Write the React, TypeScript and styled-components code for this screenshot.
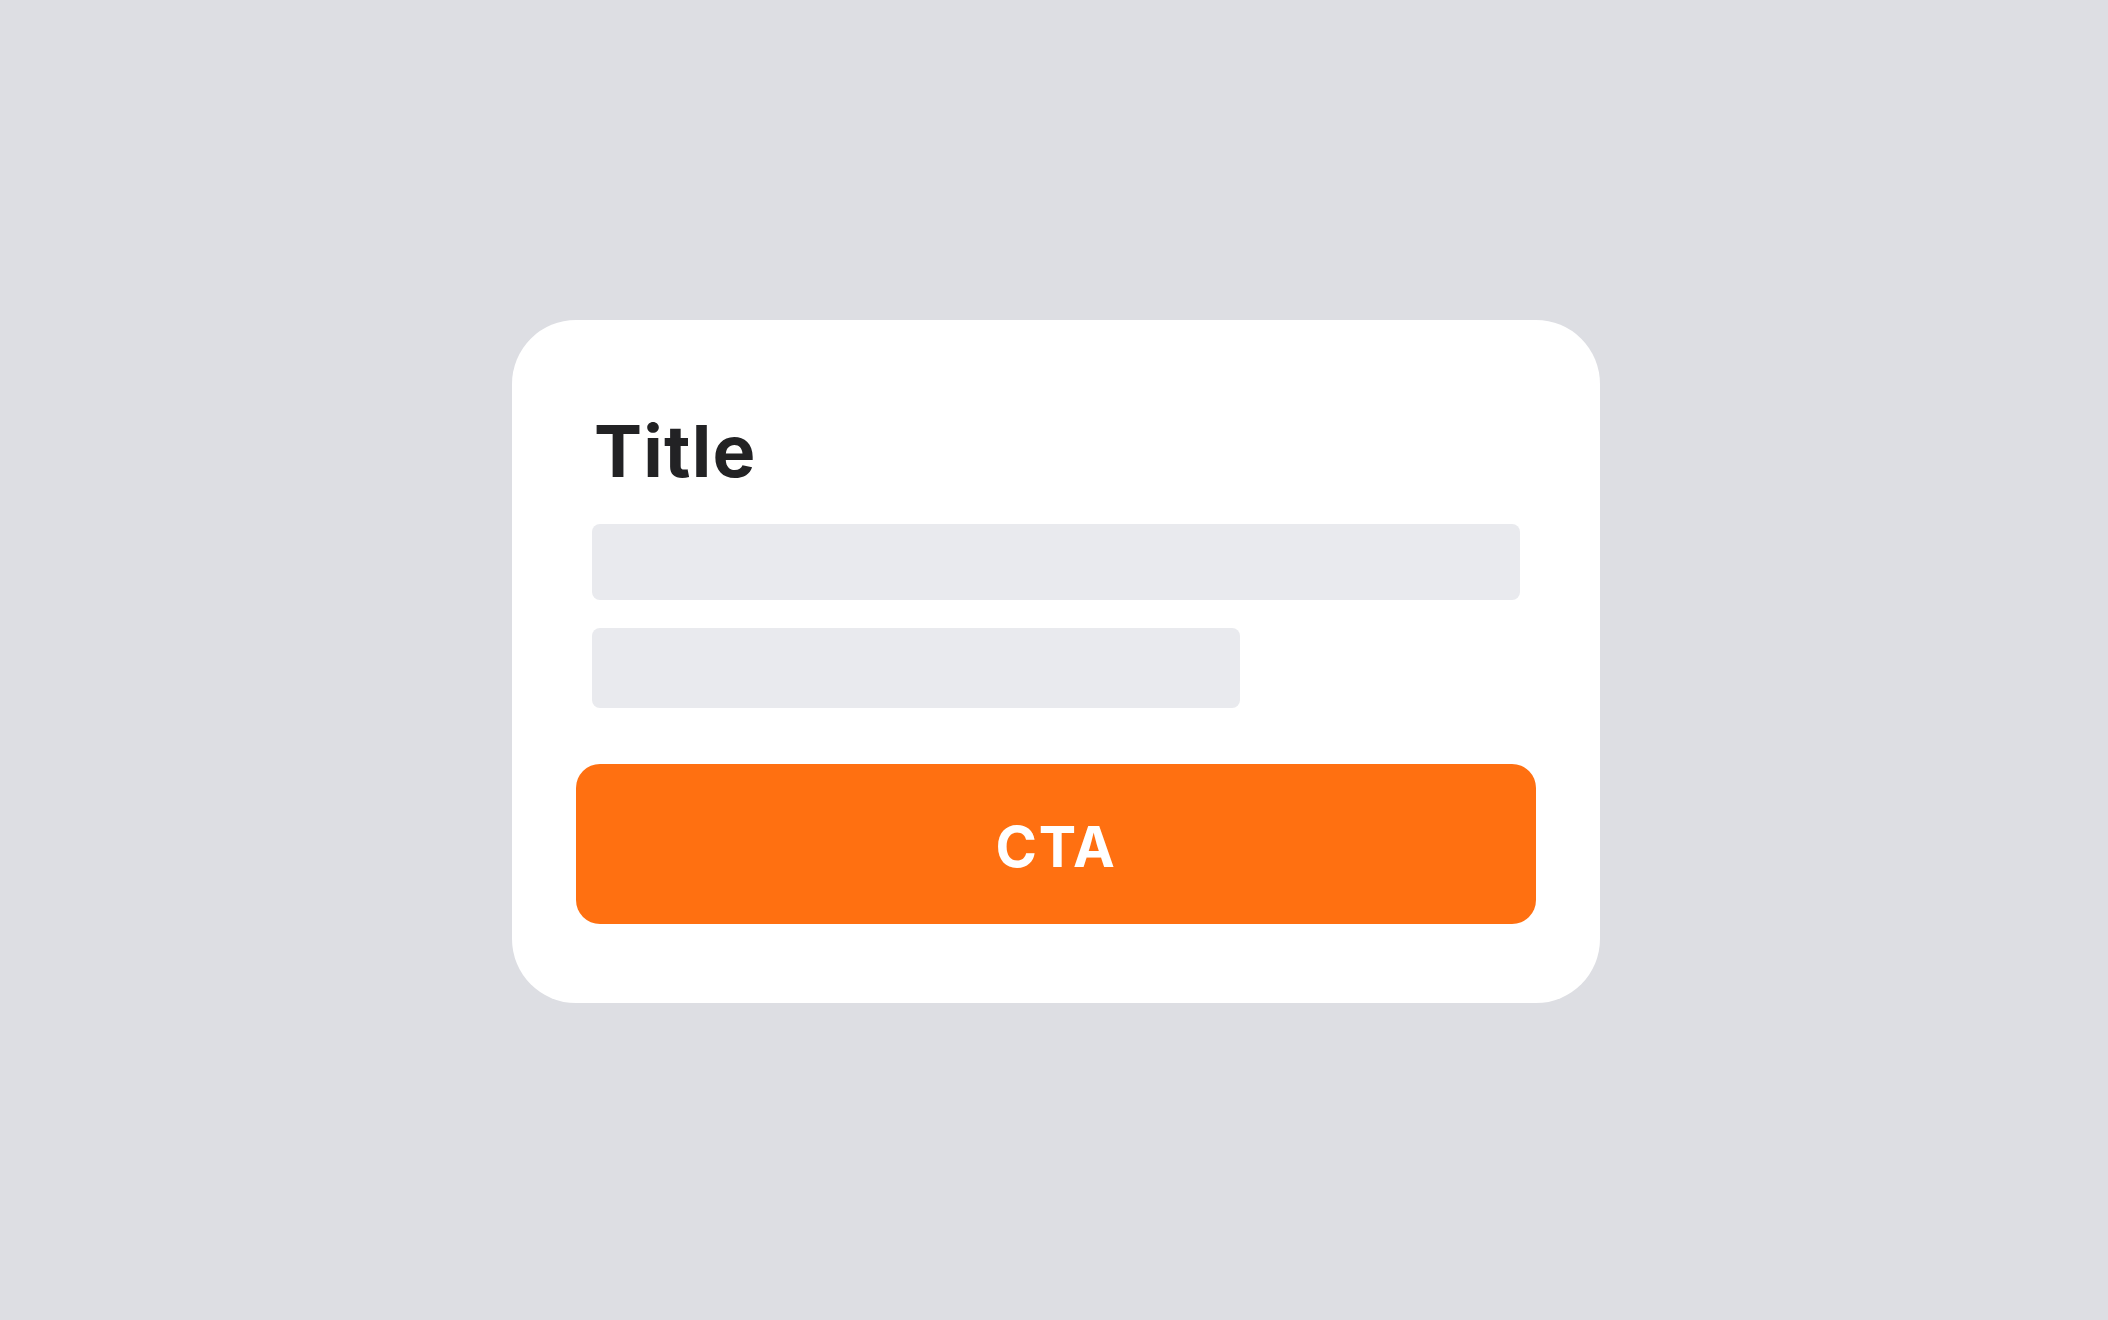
import { createGlobalStyle, styled } from "styled-components";

const GlobalStyle = createGlobalStyle`
    * {
        box-sizing: border-box;
    }

    html, body {
        margin: 0;
        padding: 0;
        background-color: #dddee3;
        font-family: Inter, "Noto Sans", "Liberation Sans", sans-serif;
    }
`;

const Page = styled.main`
    min-height: 100vh;
    padding: 3px 0 0 4px;
    display: flex;
    align-items: center;
    justify-content: center;
`;

const Card = styled.section`
    width: 1088px;
    background-color: #ffffff;
    border-radius: 64px;
    padding: 95px 64px 79px;
    display: flex;
    flex-direction: column;
`;

const Body = styled.div`
    padding: 0 16px;
    display: flex;
    flex-direction: column;
    gap: 28px;
    margin-bottom: 56px;
`;

const Title = styled.h1`
    margin: 0 0 9px;
    font-size: 72px;
    line-height: 72px;
    font-weight: 700;
    color: #222224;
    letter-spacing: 1.2px;
    padding-left: 2px;
`;

// grey placeholder lines standing in for copy
const Line = styled.div<{ $width: string; $height: number }>`
    width: ${props => props.$width};
    height: ${props => props.$height}px;
    background-color: #e9eaee;
    border-radius: 8px;
`;

const CtaButton = styled.button`
    height: 160px;
    width: 100%;
    border: none;
    border-radius: 24px;
    background-color: #ff7011;
    color: #ffffff;
    font-family: inherit;
    font-size: 56px;
    font-weight: 700;
    letter-spacing: 1.8px;
    padding: 6px 0 0;
    cursor: pointer;

    display: flex;
    align-items: center;
    justify-content: center;
`;

export default function App() {
    return (
        <>
            <GlobalStyle />
            <Page>
                <Card>
                    <Body>
                        <Title>Title</Title>
                        <Line $width="100%" $height={76} />
                        <Line $width="648px" $height={80} />
                    </Body>
                    <CtaButton>CTA</CtaButton>
                </Card>
            </Page>
        </>
    );
}
